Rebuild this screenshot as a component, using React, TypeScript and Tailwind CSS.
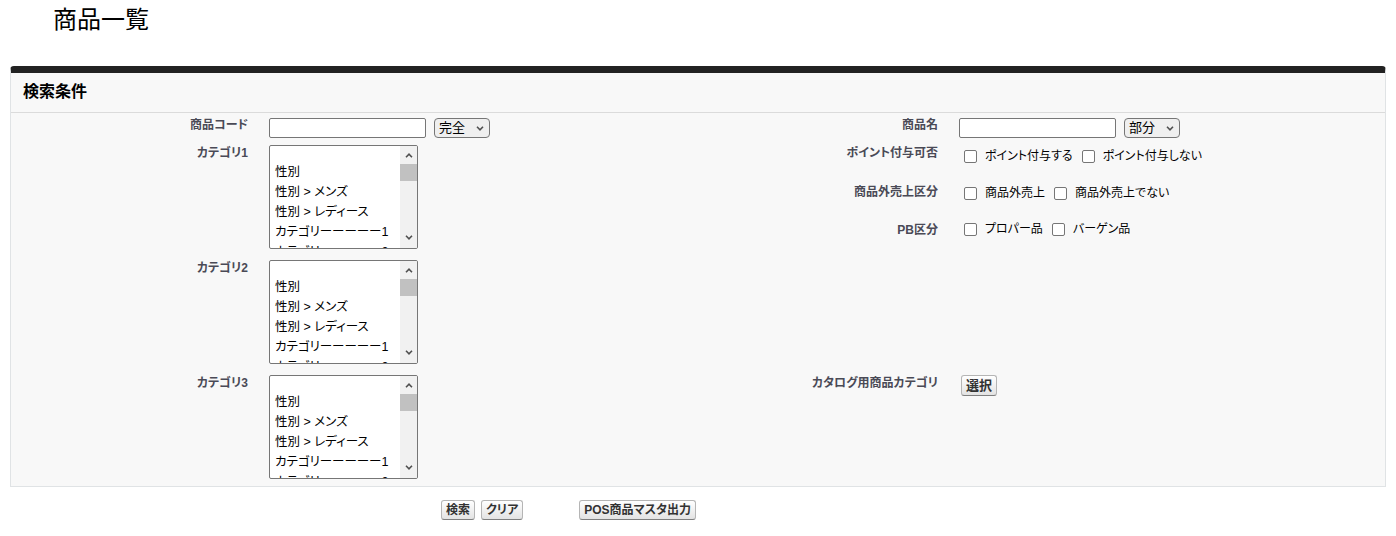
import React from "react";

const FONT = "font-['Liberation_Sans','Noto_Sans_CJK_JP',sans-serif] [font-feature-settings:'palt']";

const OPTIONS = ["", "性別", "性別 > メンズ", "性別 > レディース", "カテゴリーーーーー1", "カテゴリーーーーー2"];

function Chevron({ up }: { up?: boolean }) {
  return (
    <svg width="8" height="5" viewBox="0 0 8 5" className="block">
      <path
        d={up ? "M1 4.2 L4 1.2 L7 4.2" : "M1 0.8 L4 3.8 L7 0.8"}
        fill="none"
        stroke="#505050"
        strokeWidth="1.6"
      />
    </svg>
  );
}

function ListBox() {
  return (
    <div className="flex h-[104px] w-[149px] overflow-hidden rounded-[2px] border border-[#767676] bg-white">
      <div className="min-w-0 flex-1 overflow-hidden pl-[5px] text-[12.5px] text-black">
        {OPTIONS.map((o, i) => (
          <div key={i} className={`whitespace-nowrap ${i === 0 ? "h-[16px]" : "h-[20px] leading-[20px]"}`}>
            {o}
          </div>
        ))}
      </div>
      <div className="flex w-[17px] shrink-0 flex-col items-center bg-[#f1f1f1]">
        <div className="flex h-[18px] items-center justify-center pt-[1px]">
          <Chevron up />
        </div>
        <div className="h-[17px] w-full bg-[#c1c1c1]" />
        <div className="flex-1" />
        <div className="flex h-[18px] items-center justify-center pb-[4px]">
          <Chevron />
        </div>
      </div>
    </div>
  );
}

function SelectBox({ value }: { value: string }) {
  return (
    <div className="ml-[8px] mt-[1px] flex h-[20px] w-[56px] items-center justify-between rounded-[4px] border border-[#767676] bg-[#efefef] pl-[4px] pr-[5px] text-[13px] text-black">
      <span>{value}</span>
      <Chevron />
    </div>
  );
}

function TextBox() {
  return <div className="mt-[1px] h-[20px] w-[157px] rounded-[2px] border border-[#767676] bg-white" />;
}

function Check({ label, last }: { label: string; last?: boolean }) {
  return (
    <div className={`flex items-center ${last ? "" : "mr-[9px]"}`}>
      <span className="h-[13px] w-[13px] rounded-[2px] border border-[#767676] bg-white" />
      <span className="ml-[8px] text-[12px] leading-[13px] text-black">{label}</span>
    </div>
  );
}

function Btn({ children, className = "" }: { children: React.ReactNode; className?: string }) {
  return (
    <button
      className={`h-[20px] rounded-[3px] border border-[#b5b5b5] border-b-[#7f7f7f] bg-gradient-to-b from-white to-[#e3e3e3] px-[4px] text-[12px] font-bold leading-[16px] text-[#333] ${className}`}
    >
      {children}
    </button>
  );
}

function Row({ label, h, children }: { label: string; h: string; children?: React.ReactNode }) {
  return (
    <div className={`flex ${h}`}>
      <div className="w-[247px] shrink-0 pr-[10px] pt-[1px] text-right text-[12px] font-bold leading-[15px] text-[#4a4a56]">
        {label}
      </div>
      <div className="flex items-start pl-[11px]">{children}</div>
    </div>
  );
}

export default function App() {
  return (
    <div className={`min-h-screen bg-white ${FONT}`}>
      <div className="h-[66px] pl-[53px] pt-[5px]">
        <h1 className="text-[24px] font-normal leading-[30px] text-black">商品一覧</h1>
      </div>

      <div className="mx-[10px] rounded-t-[4px] border-x border-b border-t-[7px] border-[#e0e3e5] border-t-[#222] bg-[#f8f8f8]">
        <div className="flex h-[40px] items-center border-b border-[#dbdbdb] px-[12px] pb-[1px]">
          <h2 className="text-[16px] font-bold text-black">検索条件</h2>
        </div>

        <div className="grid grid-cols-2 pb-[7px] pt-[4px]">
          <div className="flex flex-col">
            <Row label="商品コード" h="h-[28px]">
              <TextBox />
              <SelectBox value="完全" />
            </Row>
            <Row label="カテゴリ1" h="h-[115px]">
              <ListBox />
            </Row>
            <Row label="カテゴリ2" h="h-[115px]">
              <ListBox />
            </Row>
            <Row label="カテゴリ3" h="h-[104px]">
              <ListBox />
            </Row>
          </div>

          <div className="flex flex-col pl-[3px]">
            <Row label="商品名" h="h-[28px]">
              <TextBox />
              <SelectBox value="部分" />
            </Row>
            <Row label="ポイント付与可否" h="h-[39px]">
              <div className="ml-[5px] mt-[5px] flex">
                <Check label="ポイント付与する" />
                <Check label="ポイント付与しない" last />
              </div>
            </Row>
            <Row label="商品外売上区分" h="h-[38px]">
              <div className="ml-[5px] mt-[3px] flex">
                <Check label="商品外売上" />
                <Check label="商品外売上でない" last />
              </div>
            </Row>
            <Row label="PB区分" h="h-[153px]">
              <div className="ml-[5px] mt-[1px] flex">
                <Check label="プロパー品" />
                <Check label="バーゲン品" last />
              </div>
            </Row>
            <Row label="カタログ用商品カテゴリ" h="h-[104px]">
              <Btn className="ml-[2px] h-[21px] text-[13px]">選択</Btn>
            </Row>
          </div>
        </div>
      </div>

      <div className="mt-[13px] flex pl-[441px]">
        <Btn>検索</Btn>
        <Btn className="ml-[6px] px-[3px]">クリア</Btn>
        <Btn className="ml-[56px] px-[3px]">POS商品マスタ出力</Btn>
      </div>
    </div>
  );
}
